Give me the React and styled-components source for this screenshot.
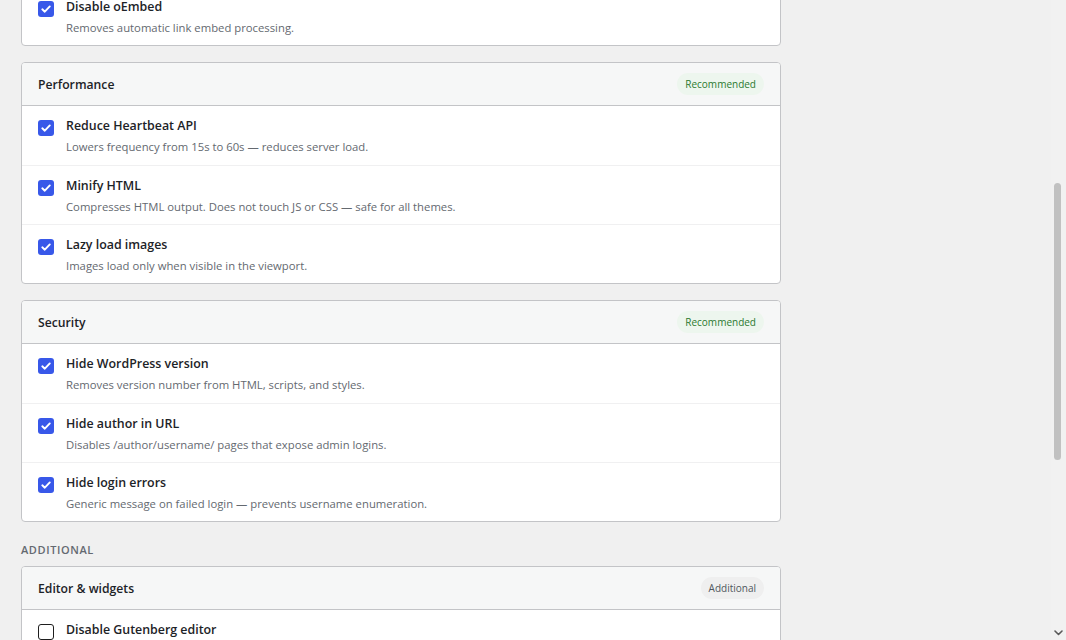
import React, { useLayoutEffect, useRef, useState } from "react";
import styled, { createGlobalStyle } from "styled-components";

const GlobalStyle = createGlobalStyle`
  html, body { margin: 0; padding: 0; height: 100%; overflow: hidden; }
  body {
    background: #f0f0f0;
    font-family: "Open Sans", "Noto Sans", "Liberation Sans", sans-serif;
    color: #1d2327;
    -webkit-font-smoothing: antialiased;
  }
  * { box-sizing: border-box; }
`;

const Shell = styled.div`
  height: 100vh;
  display: flex;
  background: #f0f0f0;
`;

const Viewport = styled.div`
  flex: 1;
  min-width: 0;
  overflow-y: auto;
  overflow-x: hidden;
  scrollbar-width: none;
  &::-webkit-scrollbar { display: none; }
`;

const ScrollRail = styled.div`
  flex: none;
  width: 15px;
  display: flex;
  flex-direction: column;
  background: #f1f1f1;
`;

const RailButton = styled.div`
  flex: none;
  height: 15px;
  display: flex;
  align-items: center;
  justify-content: center;
  color: #5a5a5a;
`;

const RailTrack = styled.div`
  flex: 1;
  display: flex;
  flex-direction: column;
  align-items: flex-start;
  padding-left: 3px;
`;

const Thumb = styled.div`
  width: 7px;
  border-radius: 4px;
  background: #c1c1c1;
`;

const Page = styled.main`
  padding: 30px 20px 8px 21px;
  display: flex;
  flex-direction: column;
  max-width: 801px;
`;

const PageTitle = styled.h1`
  margin: 0;
  font-size: 23px;
  line-height: 30px;
  font-weight: 400;
  color: #1d2327;
`;

const PageIntro = styled.p`
  margin: 6px 0 0;
  font-size: 13px;
  line-height: 20px;
  color: #50575e;
`;

const SectionLabel = styled.div`
  margin: ${(p) => (p.$first ? "44px" : "20px")} 0 8px;
  font-size: 11px;
  line-height: 16px;
  font-weight: 600;
  letter-spacing: 0.6px;
  text-transform: uppercase;
  color: #646970;
`;

const CardList = styled.div`
  display: flex;
  flex-direction: column;
  gap: 16px;
`;

const Card = styled.section`
  background: #fff;
  border: 1px solid #c3c4c7;
  border-radius: 4px;
  overflow: hidden;
`;

const CardHeader = styled.header`
  height: 43px;
  padding: 0 16px;
  display: flex;
  align-items: center;
  justify-content: space-between;
  background: #f6f7f7;
  border-bottom: 1px solid #c3c4c7;
`;

const CardTitle = styled.h2`
  margin: 0;
  font-size: 12.2px;
  font-weight: 600;
  color: #1d2327;
`;

const Badge = styled.span`
  height: 22px;
  padding: 0 8px;
  display: inline-flex;
  align-items: center;
  border-radius: 11px;
  font-size: 10px;
  font-weight: 500;
  background: ${(p) => (p.$tone === "green" ? "#edf6ee" : "#efefef")};
  color: ${(p) => (p.$tone === "green" ? "#2b7a2f" : "#50575e")};
`;

const Row = styled.label`
  display: flex;
  align-items: flex-start;
  gap: 12px;
  padding: 11px 16px 9.33px;
  cursor: pointer;
  & + & { border-top: 1px solid #f0f0f1; }
`;

const Box = styled.span`
  flex: none;
  width: 16px;
  height: 16px;
  margin-top: 3px;
  border-radius: 3px;
  display: flex;
  align-items: center;
  justify-content: center;
  background: ${(p) => (p.$checked ? "#3858e9" : "#fff")};
  border: ${(p) => (p.$checked ? "none" : "1.5px solid #1e1e1e")};
`;

const RowText = styled.div`
  display: flex;
  flex-direction: column;
  gap: 4px;
`;

const RowTitle = styled.span`
  font-size: 12.4px;
  line-height: 17px;
  font-weight: 600;
  color: #1d2327;
`;

const RowDesc = styled.span`
  font-size: 11.3px;
  line-height: 17px;
  color: #646970;
`;

const Footer = styled.div`
  margin-top: 16px;
  display: flex;
`;

const SaveButton = styled.button`
  height: 30px;
  padding: 0 14px;
  border: none;
  border-radius: 3px;
  background: #3858e9;
  color: #fff;
  font: inherit;
  font-size: 13px;
  font-weight: 500;
`;

function Check({ checked }) {
  return (
    <Box $checked={checked}>
      {checked && (
        <svg width="12" height="12" viewBox="0 0 12 12" aria-hidden="true">
          <path
            d="M2.3 6.3 L4.8 8.7 L9.8 3.4"
            fill="none"
            stroke="#fff"
            strokeWidth="1.9"
            strokeLinecap="round"
            strokeLinejoin="round"
          />
        </svg>
      )}
    </Box>
  );
}

const SECTIONS = [
  {
    label: "Recommended",
    cards: [
      {
        title: "Cleanup",
        badge: "Recommended",
        tone: "green",
        items: [
          ["Disable emojis", "Removes emoji detection script and styles from every page.", true],
          ["Remove jQuery Migrate", "Drops the legacy compatibility script on the front end.", true],
          ["Disable XML-RPC", "Turns off the remote publishing endpoint.", true],
          ["Disable oEmbed", "Removes automatic link embed processing.", true],
        ],
      },
      {
        id: "perf",
        title: "Performance",
        badge: "Recommended",
        tone: "green",
        items: [
          ["Reduce Heartbeat API", "Lowers frequency from 15s to 60s — reduces server load.", true],
          ["Minify HTML", "Compresses HTML output. Does not touch JS or CSS — safe for all themes.", true],
          ["Lazy load images", "Images load only when visible in the viewport.", true],
        ],
      },
      {
        title: "Security",
        badge: "Recommended",
        tone: "green",
        items: [
          ["Hide WordPress version", "Removes version number from HTML, scripts, and styles.", true],
          ["Hide author in URL", "Disables /author/username/ pages that expose admin logins.", true],
          ["Hide login errors", "Generic message on failed login — prevents username enumeration.", true],
        ],
      },
    ],
  },
  {
    label: "Additional",
    cards: [
      {
        title: "Editor & widgets",
        badge: "Additional",
        tone: "gray",
        items: [
          ["Disable Gutenberg editor", "Restores the classic editor for posts and pages.", false],
          ["Disable block-based widgets", "Brings back the classic widgets screen.", false],
          ["Disable revisions", "Stops storing a copy of every post save.", false],
        ],
      },
      {
        title: "Comments",
        badge: "Additional",
        tone: "gray",
        items: [
          ["Disable comments", "Removes comment forms and the admin menu entry.", false],
          ["Disable self-pingbacks", "Stops pings from your own links.", false],
        ],
      },
    ],
  },
];

const RAIL_BUTTON = 15;

export default function App() {
  const viewportRef = useRef(null);
  const perfRef = useRef(null);
  const [thumb, setThumb] = useState({ top: 168, height: 277 });

  useLayoutEffect(() => {
    const vp = viewportRef.current;
    const perf = perfRef.current;
    if (!vp || !perf) return;
    const top =
      perf.getBoundingClientRect().top - vp.getBoundingClientRect().top + vp.scrollTop;
    vp.scrollTop = top - 62;
    const track = vp.clientHeight - RAIL_BUTTON * 2;
    const ratio = vp.clientHeight / vp.scrollHeight;
    setThumb({
      top: Math.round((vp.scrollTop / vp.scrollHeight) * track),
      height: Math.round(track * ratio),
    });
  }, []);

  return (
    <>
      <GlobalStyle />
      <Shell>
        <Viewport ref={viewportRef}>
          <Page>
            <PageTitle>Site Tweaks</PageTitle>
            <PageIntro>Switch off what your site does not need. Changes apply right after saving.</PageIntro>
            {SECTIONS.map((section, si) => (
              <React.Fragment key={section.label}>
                <SectionLabel $first={si === 0}>{section.label}</SectionLabel>
                <CardList>
                  {section.cards.map((card) => (
                    <Card key={card.title} ref={card.id === "perf" ? perfRef : undefined}>
                      <CardHeader>
                        <CardTitle>{card.title}</CardTitle>
                        <Badge $tone={card.tone}>{card.badge}</Badge>
                      </CardHeader>
                      {card.items.map(([title, desc, checked]) => (
                        <Row key={title}>
                          <Check checked={checked} />
                          <RowText>
                            <RowTitle>{title}</RowTitle>
                            <RowDesc>{desc}</RowDesc>
                          </RowText>
                        </Row>
                      ))}
                    </Card>
                  ))}
                </CardList>
              </React.Fragment>
            ))}
            <Footer>
              <SaveButton type="button">Save changes</SaveButton>
            </Footer>
          </Page>
        </Viewport>
        <ScrollRail aria-hidden="true">
          <RailButton />
          <RailTrack>
            <Thumb style={{ marginTop: thumb.top, height: thumb.height }} />
          </RailTrack>
          <RailButton>
            <svg width="9" height="6" viewBox="0 0 9 6">
              <path
                d="M1 1 L4.5 4.5 L8 1"
                fill="none"
                stroke="currentColor"
                strokeWidth="1.6"
                strokeLinecap="round"
                strokeLinejoin="round"
              />
            </svg>
          </RailButton>
        </ScrollRail>
      </Shell>
    </>
  );
}
